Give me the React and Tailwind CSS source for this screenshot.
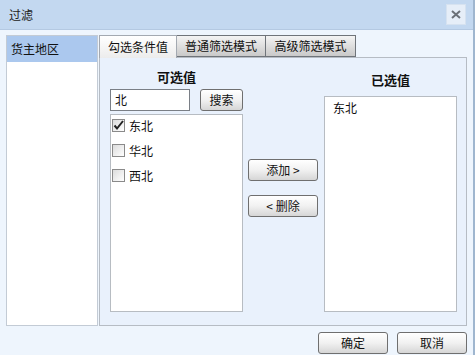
import React from 'react';

const font = { fontFamily: '"Noto Sans CJK SC", "Liberation Sans", sans-serif' };

function Btn({ children, className = '' }) {
  return (
    <button
      className={`h-[22px] rounded-[3px] border border-[#6f6f6f] bg-gradient-to-b from-[#ffffff] via-[#f1f1f1] to-[#d6d6d6] text-[12px] leading-none text-[#111] ${className}`}
    >
      {children}
    </button>
  );
}

function Check({ checked }) {
  return (
    <span className="flex h-[13px] w-[13px] items-center justify-center border border-[#8a8a8a] bg-gradient-to-br from-[#dcdcdc] to-[#ffffff]">
      {checked && (
        <svg width="11" height="11" viewBox="0 0 11 11">
          <path d="M1.5 5.5 L4 8.5 L10 1" fill="none" stroke="#222" strokeWidth="2" />
        </svg>
      )}
    </span>
  );
}

export default function App() {
  const options = [
    { label: '东北', checked: true },
    { label: '华北', checked: false },
    { label: '西北', checked: false },
  ];

  return (
    <div className="flex h-[355px] w-[475px] flex-col overflow-hidden border-r-2 border-[#9fb6cf] bg-[#eef5fd] text-[12px] text-[#111]" style={font}>
      {/* title bar */}
      <div className="flex h-[30px] items-center justify-between border-b border-[#b4c9e2] bg-[#c3d8f0] pl-[9px] pr-[7px]">
        <span className="text-[12px] text-[#222]">过滤</span>
        <span className="flex h-[21px] w-[20px] items-center justify-center border border-[#d6e2f0] bg-[#e6eef8]">
          <svg width="10" height="9" viewBox="0 0 10 9">
            <path d="M1 1 L9 8 M9 1 L1 8" stroke="#6b7077" strokeWidth="2" />
          </svg>
        </span>
      </div>

      {/* body */}
      <div className="flex pl-[6px] pt-[5px]">
        <div className="h-[291px] w-[92px] border border-[#c3cbd5] bg-white">
          <div className="flex h-[26px] items-center bg-[#abc8ee] pl-[4px]">货主地区</div>
        </div>

        <div className="ml-[1px] flex w-[368px] flex-col">
          <div className="flex h-[22px]">
            <div className="relative z-10 flex h-[23px] w-[78px] items-center justify-center border border-b-0 border-[#a3a9b1] bg-gradient-to-b from-[#ffffff] to-[#ececec]">勾选条件值</div>
            <div className="flex h-[22px] w-[89px] items-center justify-center border border-l-0 border-[#6f747a] bg-gradient-to-b from-[#f4f4f4] to-[#c9c9c9]">普通筛选模式</div>
            <div className="flex h-[22px] w-[90px] items-center justify-center border border-l-0 border-[#6f747a] bg-gradient-to-b from-[#f4f4f4] to-[#c9c9c9]">高级筛选模式</div>
          </div>

          <div className="flex h-[269px] border border-[#b6bcc4] bg-[#e9f1fc] pl-[10px]">
            {/* available */}
            <div className="flex w-[133px] flex-col">
              <div className="mt-[11px] h-[16px] text-center text-[13px] font-bold leading-[16px]">可选值</div>
              <div className="mt-[4px] flex items-center">
                <div className="flex h-[22px] w-[80px] items-center border border-[#7a7f86] bg-white pl-[4px]">北</div>
                <Btn className="ml-[10px] w-[43px]">搜索</Btn>
              </div>
              <div className="mt-[3px] h-[198px] overflow-hidden border border-[#b7bcc2] bg-white">
                <div className="-mt-[2px]">
                  {options.map((o) => (
                    <div key={o.label} className="flex h-[25px] items-center pl-[1px]">
                      <Check checked={o.checked} />
                      <span className="ml-[4px]">{o.label}</span>
                    </div>
                  ))}
                </div>
              </div>
            </div>

            {/* actions */}
            <div className="ml-[5px] flex w-[70px] flex-col pt-[101px]">
              <Btn className="w-[70px]">添加 &gt;</Btn>
              <Btn className="mt-[14px] w-[70px]">&lt; 删除</Btn>
            </div>

            {/* selected */}
            <div className="ml-[6px] flex w-[133px] flex-col">
              <div className="mt-[14px] h-[16px] text-center text-[13px] font-bold leading-[16px]">已选值</div>
              <div className="mt-[8px] h-[216px] border border-[#b7bcc2] bg-white pl-[8px] pt-[2px]">东北</div>
            </div>
          </div>
        </div>
      </div>

      {/* footer */}
      <div className="flex justify-end gap-[9px] pr-[6px] pt-[6px]">
        <Btn className="w-[70px]">确定</Btn>
        <Btn className="w-[70px]">取消</Btn>
      </div>
    </div>
  );
}
